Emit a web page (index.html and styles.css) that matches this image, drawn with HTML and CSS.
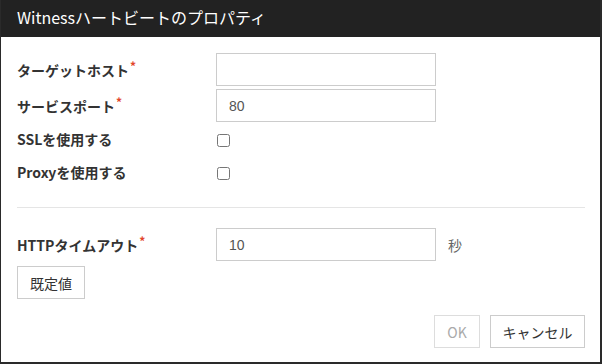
FILE: index.html
```html
<!DOCTYPE html>
<html>
<head>
    <title>Witnessハートビートのプロパティ</title>
    <link rel="stylesheet" href="styles.css">
</head>
<body>
    <div class="dialog">
        <header class="dialog-header">Witnessハートビートのプロパティ</header>
        <div class="dialog-body">
            <div class="row">
                <label class="label">ターゲットホスト<span class="req">*</span></label>
                <input type="text" class="field" value="">
            </div>
            <div class="row">
                <label class="label">サービスポート<span class="req">*</span></label>
                <input type="text" class="field" value="80">
            </div>
            <div class="row check-row">
                <label class="label">SSLを使用する</label>
                <input type="checkbox" class="check">
            </div>
            <div class="row check-row">
                <label class="label">Proxyを使用する</label>
                <input type="checkbox" class="check">
            </div>
            <hr class="divider">
            <div class="row">
                <label class="label">HTTPタイムアウト<span class="req">*</span></label>
                <input type="text" class="field" value="10">
                <span class="unit">秒</span>
            </div>
            <button type="button" class="btn btn-default">既定値</button>
            <div class="footer">
                <button type="button" class="btn btn-ok" disabled>OK</button>
                <button type="button" class="btn btn-cancel">キャンセル</button>
            </div>
        </div>
    </div>
</body>
</html>
```

FILE: styles.css
```css
html, body {
    margin: 0;
    padding: 0;
    background: #222;
}
body {
    font-family: "Noto Sans CJK JP", "Liberation Sans", sans-serif;
    color: #333;
}
.dialog {
    width: 602px;
    height: 364px;
    box-sizing: border-box;
    border-left: 1px solid #2a2a2a;
    border-right: 2px solid #2a2a2a;
    border-bottom: 2px solid #2a2a2a;
    background: #fff;
    display: flex;
    flex-direction: column;
}
.dialog-header {
    height: 37px;
    line-height: 35px;
    background: #222;
    color: #fff;
    font-size: 16px;
    padding: 0 16px;
}
.dialog-body {
    flex: 1;
    padding: 16px 15px 0 16px;
}
.row {
    display: flex;
    align-items: center;
    margin-bottom: 3px;
}
.check-row {
    height: 30px;
}
.label {
    width: 199px;
    font-size: 14px;
    font-weight: bold;
    color: #333;
    margin-top: -3px;
}
.req {
    color: #e2452a;
    font-size: 12px;
    vertical-align: 5px;
    margin-left: 1px;
}
.field {
    width: 220px;
    height: 33px;
    box-sizing: border-box;
    border: 1px solid #ccc;
    padding: 0 12px;
    font-family: "Liberation Sans", "Noto Sans CJK JP", sans-serif;
    font-size: 14px;
    color: #555;
    outline: none;
}
.check {
    width: 13px;
    height: 13px;
    margin: 0 0 0 1px;
}
.divider {
    border: 0;
    border-top: 1px solid #e5e5e5;
    margin: 19px 0 20px;
}
.unit {
    font-size: 14px;
    color: #666;
    margin-left: 12px;
}
.btn {
    height: 33px;
    box-sizing: border-box;
    background: #fff;
    border: 1px solid #ccc;
    padding: 0 12px;
    font-family: "Noto Sans CJK JP", sans-serif;
    font-size: 14px;
    color: #333;
}
.btn-default {
    display: block;
    width: 68px;
    padding: 0;
    margin-top: 5px;
}
.footer {
    display: flex;
    justify-content: flex-end;
    gap: 10px;
    margin-top: 16px;
}
.btn-ok {
    width: 46px;
    padding: 0;
    color: #aaa;
    border-color: #ddd;
}
.btn-cancel {
    width: 95px;
    padding: 0;
}
```
